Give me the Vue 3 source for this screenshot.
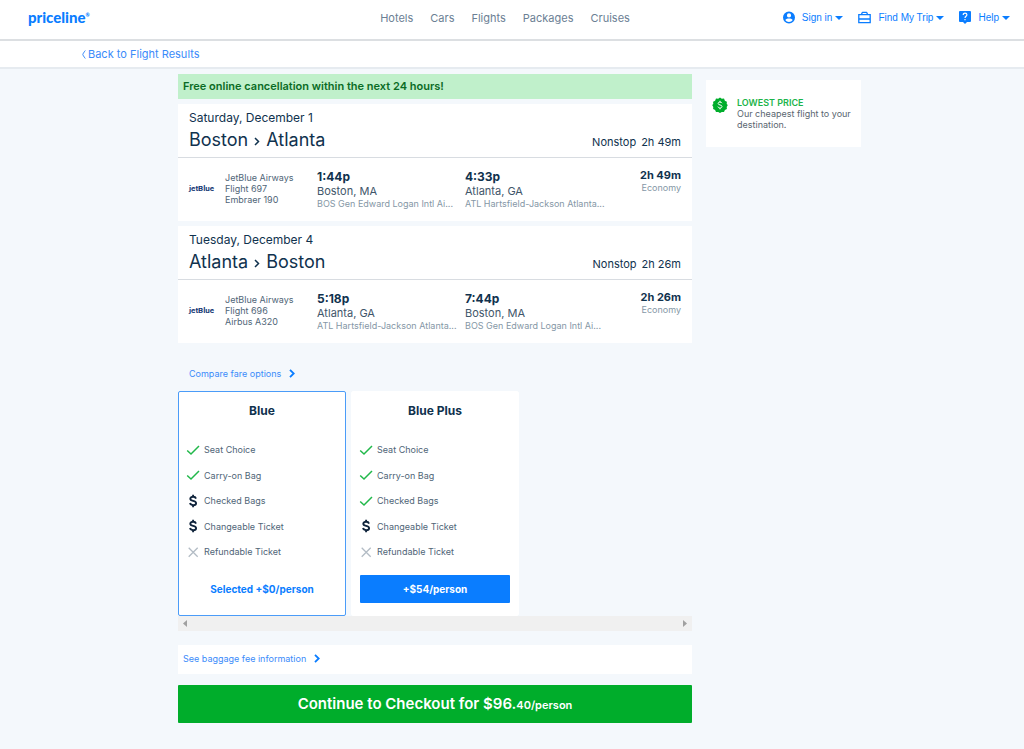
<script setup>
const nav = ['Hotels', 'Cars', 'Flights', 'Packages', 'Cruises']

const slices = [
  {
    date: 'Saturday, December 1', from: 'Boston', to: 'Atlanta', duration: '2h 49m',
    details: ['JetBlue Airways', 'Flight 697', 'Embraer 190'],
    stops: [
      { time: '1:44p', city: 'Boston, MA', airport: 'BOS Gen Edward Logan Intl Ai...' },
      { time: '4:33p', city: 'Atlanta, GA', airport: 'ATL Hartsfield-Jackson Atlanta...' },
    ],
  },
  {
    date: 'Tuesday, December 4', from: 'Atlanta', to: 'Boston', duration: '2h 26m',
    details: ['JetBlue Airways', 'Flight 696', 'Airbus A320'],
    stops: [
      { time: '5:18p', city: 'Atlanta, GA', airport: 'ATL Hartsfield-Jackson Atlanta...' },
      { time: '7:44p', city: 'Boston, MA', airport: 'BOS Gen Edward Logan Intl Ai...' },
    ],
  },
]

const features = ['Seat Choice', 'Carry-on Bag', 'Checked Bags', 'Changeable Ticket', 'Refundable Ticket']
const fares = [
  { name: 'Blue', selected: true, label: 'Selected +$0/person', marks: ['yes', 'yes', 'fee', 'fee', 'no'] },
  { name: 'Blue Plus', selected: false, label: '+$54/person', marks: ['yes', 'yes', 'yes', 'fee', 'no'] },
]
</script>

<template>
  <div class="page">
    <header class="top">
      <div class="brand"><a href="#" class="logo">priceline<sup>®</sup></a></div>
      <nav class="nav">
        <a v-for="item in nav" :key="item" href="#">{{ item }}</a>
      </nav>
      <div class="account">
        <button type="button">
          <svg class="ico" viewBox="0 0 12 12"><path fill="#0a7dff" fill-rule="evenodd" d="M6 0a6 6 0 1 1 0 12A6 6 0 0 1 6 0zM6 1.8a2.1 2.1 0 1 0 0 4.2a2.1 2.1 0 0 0 0-4.2zM2.3 8.6C3.1 9.900 4.400 10.600 6 10.600s2.900-.7 3.700-2C8.900 7.500 7.300 7.100 6 7.100S3.100 7.500 2.300 8.600z" /></svg>
          <span>Sign in</span><i class="caret"></i>
        </button>
        <button type="button">
          <svg class="ico case" viewBox="0 0 13 12"><path fill="none" stroke="#0a7dff" stroke-width="1.300" d="M.8 3.200h11.400v7.900H.8zM.8 7.500h11.400M3.800 3V1.700l.8-.9h3.800l.8.900V3" /></svg>
          <span>Find My Trip</span><i class="caret"></i>
        </button>
        <button type="button">
          <svg class="ico" viewBox="0 0 12 13"><path fill="#0a7dff" d="M1 0h10a1 1 0 0 1 1 1v9a1 1 0 0 1-1 1H8l-2 2-2-2H1a1 1 0 0 1-1-1V1a1 1 0 0 1 1-1z" /><path fill="none" stroke="#fff" stroke-width="1.200" d="M4.200 3.900c0-2.400 3.700-2.300 3.700-.1C7.900 5.200 6 5.300 6 7M6 8v1.300" /></svg>
          <span>Help</span><i class="caret"></i>
        </button>
      </div>
    </header>

    <div class="sub">
      <a href="#"><svg viewBox="0 0 4 9"><path fill="none" stroke="#3b8bfa" d="M3.300.5C1.800 2.500.8 4 .8 4.500S1.800 6.500 3.300 8.500" /></svg>Back to Flight Results</a>
    </div>

    <main class="body">
      <section class="main">
        <p class="banner">Free online cancellation within the next 24 hours!</p>

        <article v-for="s in slices" :key="s.date" class="slice">
          <header class="slice-head">
            <div>
              <p class="date">{{ s.date }}</p>
              <h2>{{ s.from }}<svg viewBox="0 0 6 9"><path fill="none" stroke="#10324e" stroke-width="1.500" d="M1 1l3.500 3.500L1 8" /></svg>{{ s.to }}</h2>
            </div>
            <p class="total"><span>Nonstop</span><span>{{ s.duration }}</span></p>
          </header>
          <div class="leg">
            <span class="airline">jetBlue</span>
            <p class="flight"><span v-for="d in s.details" :key="d">{{ d }}</span></p>
            <div v-for="p in s.stops" :key="p.time" class="stop">
              <strong>{{ p.time }}</strong>
              <span>{{ p.city }}</span>
              <small>{{ p.airport }}</small>
            </div>
            <div class="cabin"><strong>{{ s.duration }}</strong><span>Economy</span></div>
          </div>
        </article>

        <a href="#" class="more compare">Compare fare options<svg viewBox="0 0 6 9"><path fill="none" stroke="#0a7dff" stroke-width="1.800" d="M1 .8l3.700 3.700L1 8.200" /></svg></a>

        <div class="fares">
          <article v-for="f in fares" :key="f.name" class="fare" :class="{ selected: f.selected }">
            <h3>{{ f.name }}</h3>
            <ul>
              <li v-for="(m, i) in f.marks" :key="i">
                <svg v-if="m === 'yes'" viewBox="0 0 14 14"><path fill="none" stroke="#21b84a" stroke-width="1.500" d="M1.200 7.500l3.800 3.500L13 3" /></svg>
                <svg v-else-if="m === 'fee'" viewBox="0 0 14 14"><path fill="none" stroke="#10243c" stroke-width="1.900" d="M10 4.600C9.600 3.300 8.600 2.800 7.100 2.800 5.400 2.800 4.300 3.500 4.300 4.700c0 3 5.800 1.400 5.800 4.500 0 1.300-1.200 2-2.900 2-1.700 0-2.800-.7-3.200-2.100M7.100.7v2M7.100 11.300v2" /></svg>
                <svg v-else viewBox="0 0 14 14"><path fill="none" stroke="#b3bcc5" stroke-width="1.300" d="M2.700 2.700l9 9M11.700 2.700l-9 9" /></svg>
                {{ features[i] }}
              </li>
            </ul>
            <button type="button">{{ f.label }}</button>
          </article>
        </div>
        <div class="scroller">
          <button type="button" aria-label="Scroll left"><svg viewBox="0 0 4 7"><path fill="#a0a0a0" d="M4 0v7L0 3.500z" /></svg></button>
          <button type="button" aria-label="Scroll right"><svg viewBox="0 0 4 7"><path fill="#a0a0a0" d="M0 0v7l4-3.500z" /></svg></button>
        </div>

        <div class="baggage">
          <a href="#" class="more">See baggage fee information<svg viewBox="0 0 6 9"><path fill="none" stroke="#0a7dff" stroke-width="1.800" d="M1 .8l3.700 3.700L1 8.200" /></svg></a>
        </div>

        <button type="button" class="checkout">Continue to Checkout for $96.<small>40/person</small></button>
      </section>

      <aside class="lowest">
        <svg viewBox="0 0 16 16"><path fill="#00ad2b" d="M8 .5l1.800 1.300 2.200-.2.900 2.100 2 1-.2 2.200L15.800 8l-1.100 1.900.2 2.200-2 .9-.9 2.100-2.200-.2L8 16l-1.800-1.100-2.200.2-.9-2.100-2-.9.200-2.200L.2 8l1.100-1.100-.2-2.200 2-1L4 1.600l2.200.2z" /><path fill="none" stroke="#fff" d="M10 6.200C9.700 5.400 9 5.100 8 5.100c-1.100 0-1.900.5-1.900 1.300C6.100 8.500 10 7.400 10 9.600c0 .9-.8 1.400-2 1.400-1.100 0-1.900-.5-2.100-1.400M8 3.800v1.300M8 11v1.300" /></svg>
        <div><strong>LOWEST PRICE</strong><p>Our cheapest flight to your destination.</p></div>
      </aside>
    </main>
  </div>
</template>

<style>
body { margin: 0; background: #f4f8fc; }
</style>

<style scoped>
.page { min-height: 100vh; font-family: Inter, "Open Sans", sans-serif; font-size: 9px; line-height: 11px; color: #10324e; background: #f4f8fc; }
.page * { box-sizing: border-box; }
p, h2, h3, ul { margin: 0; padding: 0; }
a { color: #3b8bfa; text-decoration: none; }
button { border: 0; padding: 0; background: none; font: inherit; cursor: pointer; }
svg { display: block; flex: none; }

.top { display: flex; align-items: center; height: 41px; padding: 0 14px 4px 0; background: #fff; border-bottom: 2px solid #dcdfe2; }
.brand { display: flex; flex: 1 0 0; min-width: 0; }
.logo { margin: 0 0 2px 28px; font: 900 15px/18px Lato, sans-serif; color: #0a7dff; }
.logo sup { font-size: 5px; line-height: 5px; vertical-align: 6px; }
.nav { display: flex; gap: 17px; font-size: 11px; line-height: 14px; }
.nav a { color: #6b8094; }
.account { flex: 1 0 0; display: flex; justify-content: flex-end; gap: 15px; }
.account button { display: flex; align-items: center; font: 10px/14px "Liberation Sans", Arial, sans-serif; color: #0a7dff; white-space: nowrap; }
.account span { padding-top: 1px; }
.ico { width: 12px; height: 13px; margin-right: 7px; }
.ico.case { width: 13px; }
.caret { border: 4px solid transparent; border-top-color: #0a7dff; border-bottom: 0; margin: 1px 0 0 3px; }

.sub { height: 28px; padding: 5px 82px; background: #fff; border-bottom: 2px solid #e6ebf0; font-size: 11px; line-height: 16px; }
.sub a { display: inline-flex; align-items: center; gap: 2px; }
.sub svg { width: 4px; height: 9px; }

.body { display: grid; grid-template-columns: minmax(0, 514px) 155px; gap: 14px; justify-content: center; align-items: start; padding: 5px 0 24px 15px; }
.main { display: flex; flex-direction: column; }
.banner { padding: 5px 5px 6px; background: #c0f0cb; color: #0b6b25; font-size: 11px; line-height: 14px; font-weight: 600; }

.slice { margin-top: 5px; background: #fff; }
.slice-head { display: flex; justify-content: space-between; align-items: flex-end; height: 54px; padding: 6px 11px; border-bottom: 1px solid #d8dce1; }
.date { font-size: 12px; line-height: 16px; }
h2 { display: flex; align-items: center; margin-top: 3px; font-size: 18px; line-height: 22px; font-weight: 400; }
h2 svg { width: 6px; height: 9px; margin: 2px 6px 0; }
.total { display: flex; gap: 5px; font-size: 11px; line-height: 18px; }
.leg { display: flex; height: 63px; padding: 11px 11px 0; }
.airline { width: 36px; padding-top: 15px; font: 700 8px/10px Roboto, sans-serif; color: #163a75; }
.flight { width: 92px; padding-top: 3px; color: #4f6577; white-space: nowrap; }
.flight span, .stop > *, .cabin > * { display: block; }
.stop { width: 148px; white-space: nowrap; }
.stop strong { font-size: 12px; line-height: 15px; }
.stop span { color: #3f566a; font-size: 11px; line-height: 14px; }
.stop small { font-size: 9px; line-height: 11px; color: #8597a6; }
.cabin { margin-left: auto; text-align: right; }
.cabin strong { font-size: 11px; line-height: 13px; }
.cabin span { color: #8597a6; }

.more { display: inline-flex; align-items: center; gap: 8px; line-height: 13px; }
.more svg { width: 6px; height: 9px; }
.compare { align-self: flex-start; margin: 24px 11px 11px; }

.fares { display: flex; gap: 5px; }
.fare { width: 168px; height: 225px; padding: 11px 8px; background: #fff; border: 1px solid #fff; border-radius: 2px; }
.fare.selected { border-color: #4b9cf8; }
h3 { font-size: 12px; line-height: 16px; font-weight: 700; text-align: center; }
ul { display: flex; flex-direction: column; justify-content: space-between; height: 127px; list-style: none; margin-top: 18px; }
li { display: flex; align-items: center; gap: 4px; height: 25px; color: #4f6577; }
li svg { width: 14px; height: 14px; margin-left: -1px; }
.fare button { width: 150px; height: 28px; margin-top: 11px; background: #0a7dff; border-radius: 1px; color: #fff; font-size: 10px; font-weight: 700; }
.fare.selected button { background: none; color: #0a7dff; }

.scroller { display: flex; justify-content: space-between; align-items: center; height: 15px; padding: 0 5px; background: #f0f0f0; }
.scroller svg { width: 4px; height: 7px; }
.baggage { margin: 14px 0 11px; padding: 7px 5px 9px; background: #fff; line-height: 13px; }
.baggage .more { display: flex; }
.checkout { height: 38px; background: #00ad2b; border-radius: 1px; color: #fff; font-size: 15px; font-weight: 600; }
.checkout small { font-size: 11px; }

.lowest { display: flex; gap: 9px; margin-top: 6px; height: 67px; padding: 17px 6px 0; background: #fff; color: #5a6670; }
.lowest svg { width: 16px; height: 16px; }
.lowest strong { display: block; color: #1cb44a; font-weight: 600; }
</style>
